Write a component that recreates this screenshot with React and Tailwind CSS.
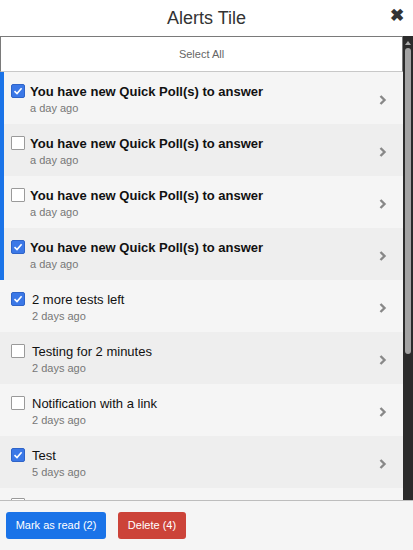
import React from "react";

const rows = [
  { t: "You have new Quick Poll(s) to answer", s: "a day ago", c: true, bold: true },
  { t: "You have new Quick Poll(s) to answer", s: "a day ago", c: false, bold: true },
  { t: "You have new Quick Poll(s) to answer", s: "a day ago", c: false, bold: true },
  { t: "You have new Quick Poll(s) to answer", s: "a day ago", c: true, bold: true },
  { t: "2 more tests left", s: "2 days ago", c: true },
  { t: "Testing for 2 minutes", s: "2 days ago", c: false },
  { t: "Notification with a link", s: "2 days ago", c: false },
  { t: "Test", s: "5 days ago", c: true },
  { t: "", s: "", c: false },
];

function Box({ checked }) {
  return checked ? (
    <div className="w-[14px] h-[14px] shrink-0 rounded-[2px] bg-[#3b78e7] border border-[#2f64c8] flex items-center justify-center">
      <svg width="10" height="10" viewBox="0 0 10 10">
        <path d="M1.5 5.2 L4 7.6 L8.6 2.2" fill="none" stroke="white" strokeWidth="1.6" />
      </svg>
    </div>
  ) : (
    <div className="w-[14px] h-[14px] shrink-0 rounded-[1px] bg-white border border-[#9a9a9a]" />
  );
}

export default function App() {
  return (
    <div className="w-[413px] h-[550px] bg-white flex flex-col overflow-hidden" style={{ fontFamily: '"Liberation Sans", Arial, sans-serif' }}>
      <div className="h-[36px] shrink-0 relative flex items-center justify-center">
        <span className="text-[18px] text-[#333] leading-none">Alerts Tile</span>
        <span className="absolute right-[9px] top-[7px] text-[17px] font-bold text-[#333] leading-none">✖</span>
      </div>
      <div className="flex-1 flex min-h-0">
        <div className="flex-1 flex flex-col overflow-hidden min-w-0">
          <div className="h-[36px] shrink-0 bg-white border border-[#7a7a7a] border-b-[#c8c8c8] flex items-center justify-center text-[11px] text-[#666]">
            Select All
          </div>
          {rows.map((r, i) => (
            <div
              key={i}
              className={`h-[52px] shrink-0 flex items-center ${i % 2 === 0 ? "bg-[#f5f5f5]" : "bg-[#eeeeee]"} ${r.bold ? "border-l-[4px] border-[#1a73e8] pl-[7px]" : "pl-[11px]"}`}
            >
              <div className={i === 8 ? "-mt-[18px]" : "-mt-[14px]"}>
                <Box checked={r.c} />
              </div>
              <div className={`flex-1 flex flex-col pt-[4px] ${r.bold ? "ml-[5px]" : "ml-[7px]"}`}>
                {r.t && <span className={`text-[13px] leading-[16px] text-[#111] ${r.bold ? "font-bold" : ""}`}>{r.t}</span>}
                {r.s && <span className="text-[11px] leading-[15px] text-[#777] mt-[1px]">{r.s}</span>}
              </div>
              <svg width="10" height="12" viewBox="0 0 10 12" className="mr-[15px] mt-[3px]">
                <path d="M2.5 2 L6.5 6 L2.5 10" fill="none" stroke="#888" strokeWidth="2.4" />
              </svg>
            </div>
          ))}
        </div>
        <div className="w-[10px] shrink-0 bg-[#2b2b2b] flex flex-col items-center pt-[4px]">
          <svg width="6" height="5" viewBox="0 0 6 5">
            <path d="M0 5 L3 1 L6 5 Z" fill="#aaa" />
          </svg>
          <div className="mt-[3px] w-[6px] h-[306px] rounded-[3px] bg-[#a3a3a3]" />
        </div>
      </div>
      <div className="h-[50px] shrink-0 border-t border-[#bdbdbd] bg-[#f5f5f5] flex items-center gap-[12px] pl-[6px]">
        <button className="h-[27px] w-[100px] rounded-[3px] bg-[#1a73e8] text-white text-[11px]">Mark as read (2)</button>
        <button className="h-[27px] w-[68px] rounded-[3px] bg-[#cc4339] text-white text-[11px]">Delete (4)</button>
      </div>
    </div>
  );
}
